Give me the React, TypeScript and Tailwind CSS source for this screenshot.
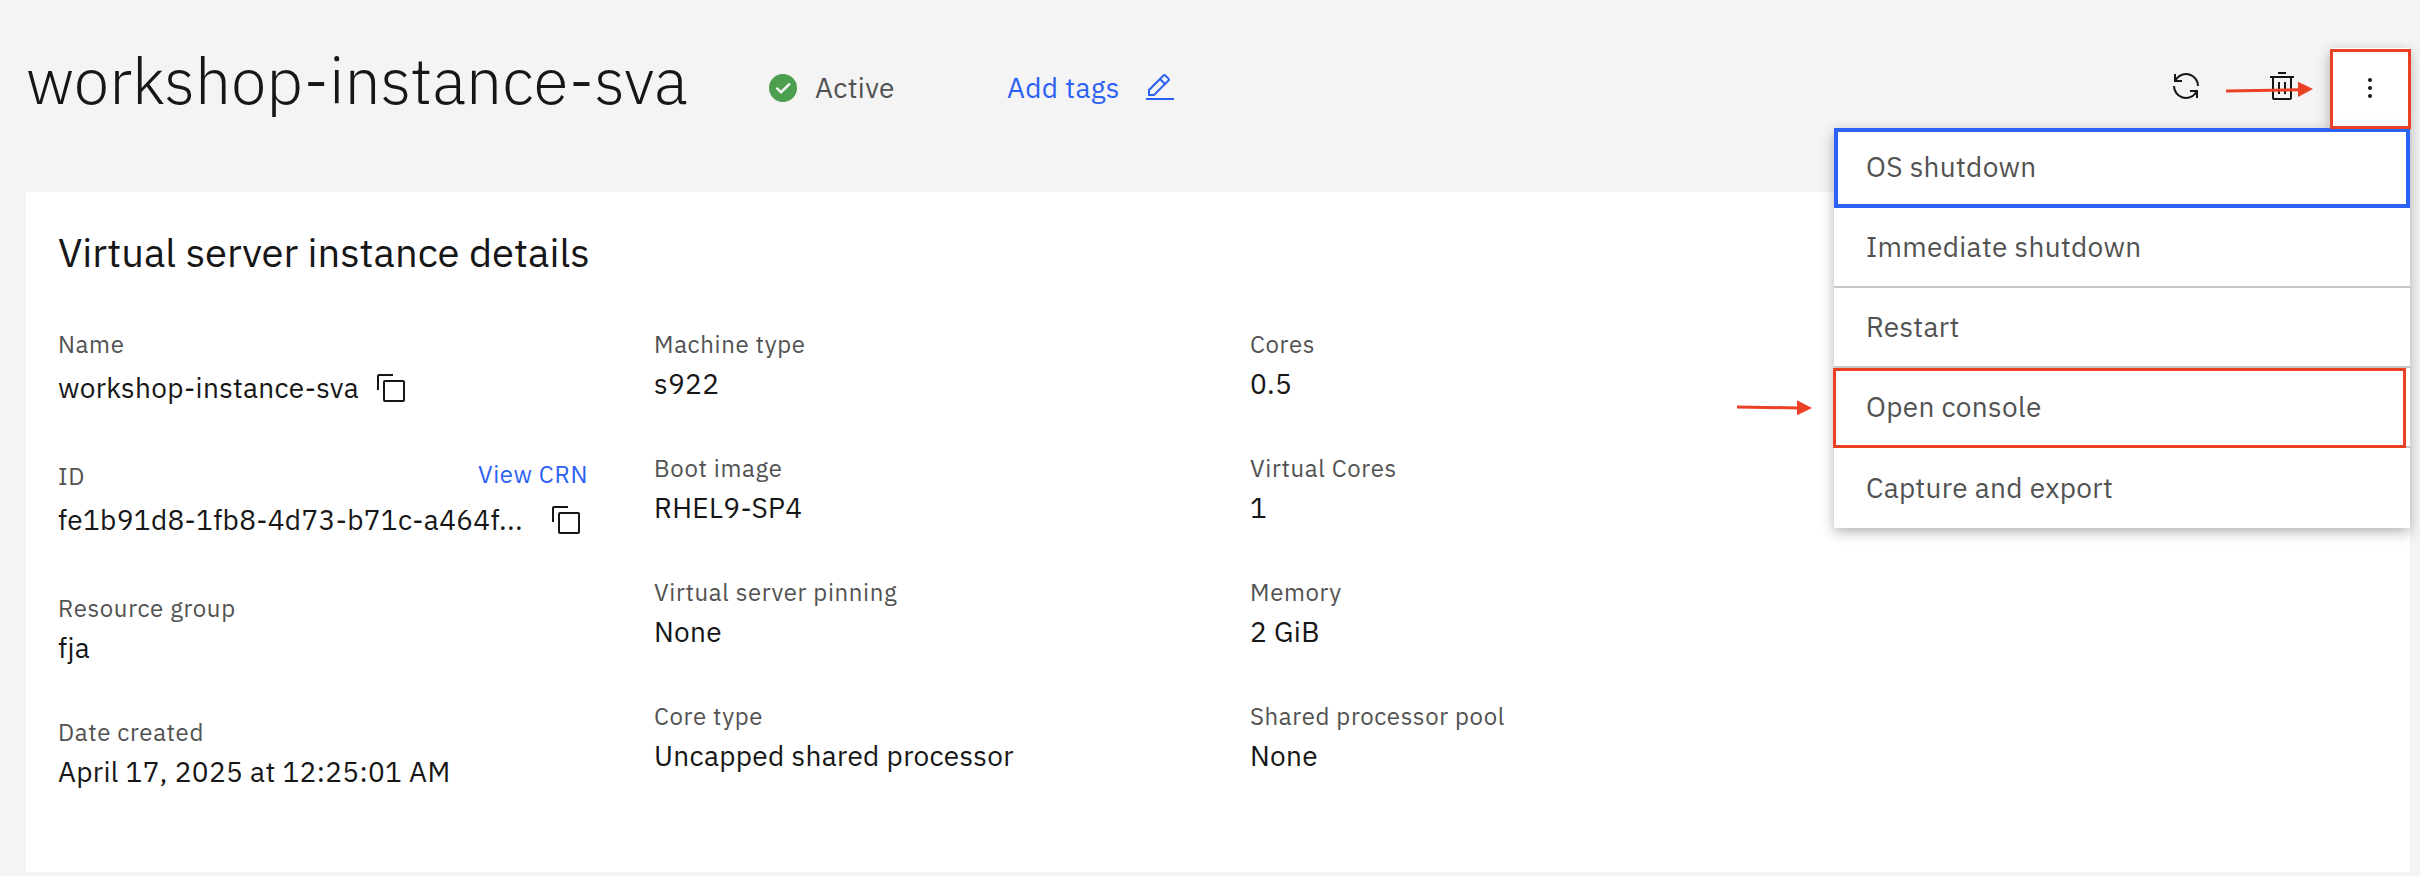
import type { ReactNode } from "react";

type IconProps = { className?: string; children: ReactNode };

function Icon({ className = "", children }: IconProps) {
  return (
    <svg viewBox="0 0 32 32" fill="currentColor" className={`size-8 shrink-0 ${className}`} aria-hidden="true">
      {children}
    </svg>
  );
}

function CopyIcon({ className }: { className?: string }) {
  return (
    <Icon className={className}>
      <path d="M28,10V28H10V10H28m0-2H10a2,2,0,0,0-2,2V28a2,2,0,0,0,2,2H28a2,2,0,0,0,2-2V10a2,2,0,0,0-2-2Z" />
      <path d="M4,18H2V4A2,2,0,0,1,4,2H18V4H4Z" />
    </Icon>
  );
}

function Field({ label, value }: { label: string; value: string }) {
  return (
    <div className="mb-[50px] flex flex-col items-start gap-[5px]">
      <div className="text-2xl/8 tracking-[0.64px] text-[#525252]">{label}</div>
      <div className="text-[28px]/[37px] tracking-[0.32px]">{value}</div>
    </div>
  );
}

function Header() {
  return (
    <header className="flex h-48 items-start pr-2.5 pl-[26px]">
      <h1 className="mt-10 w-[741px] text-[64px]/[80px] font-light">workshop-instance-sva</h1>
      <div className="mt-[69px] flex w-[240px] items-start text-[28px]/[37px] tracking-[0.32px] text-[#525252]">
        <Icon className="mt-[3px] mr-4 text-[#4d9f50]">
          <path d="M16 2a14 14 0 1 0 0 28a14 14 0 0 0 0-28zM14 22L8.600 16.600l1.800-1.600L14 18.600l8-7.800l1.800 1.600z" />
        </Icon>
        <span>Active</span>
      </div>
      <a className="mt-[69px] flex items-start text-[28px]/[37px] tracking-[0.32px] text-[#2c61f6]">
        <span className="w-[137px]">Add tags</span>
        <Icon className="mt-[3px]">
          <path d="M2 26H30V28H2z" />
          <path d="M25.4,9c.8-.8.8-2,0-2.8l-3.6-3.6c-.8-.8-2-.8-2.8,0L4,17.6V24h6.400ZM20.4,4,24,7.600l-3,3L17.4,7ZM6,22V18.4l10-10,3.600,3.600-10,10Z" />
        </Icon>
      </a>
      <div className="ml-auto flex items-start">
        <Icon className="mt-[70px] mr-16">
          <path d="M12,10H6.78A11,11,0,0,1,27,16h2A13,13,0,0,0,6,7.68V4H4v8h8Z" />
          <path d="M20,22h5.22A11,11,0,0,1,5,16H3a13,13,0,0,0,23,8.32V28h2V20H20Z" />
        </Icon>
        <Icon className="mt-[70px] mr-8">
          <path d="M12 12H14V24H12zM18 12H20V24H18zM12 2H20V4H12z" />
          <path d="M4,6V8H6V28a2,2,0,0,0,2,2H24a2,2,0,0,0,2-2V8h2V6ZM8,28V8H24V28Z" />
        </Icon>
        <button className="mt-12 flex size-20 items-center justify-center bg-white shadow-[0_4px_12px_rgba(0,0,0,0.3)]">
          <Icon>
            <circle cx="16" cy="8" r="2" />
            <circle cx="16" cy="16" r="2" />
            <circle cx="16" cy="24" r="2" />
          </Icon>
        </button>
      </div>
    </header>
  );
}

function Menu() {
  const item = "flex h-20 items-start px-8 text-[28px]/[37px] tracking-[0.32px] text-[#525252]";
  return (
    <div className="absolute top-32 left-[1834px] w-[576px] bg-white shadow-[0_4px_12px_rgba(0,0,0,0.3)]">
      <div className={`${item} pt-5 shadow-[inset_0_0_0_4px_#2c61f6]`}>OS shutdown</div>
      <div className={`${item} border-b-2 border-[#c6c6c6] pt-5`}>Immediate shutdown</div>
      <div className={`${item} border-b-2 border-[#c6c6c6] pt-5`}>Restart</div>
      <div className={`${item} border-b-2 border-[#c6c6c6] pt-5`}>Open console</div>
      <div className={`${item} pt-[21px]`}>Capture and export</div>
    </div>
  );
}

function Annotations() {
  return (
    <>
      <div className="absolute top-[49px] left-[2330px] h-20 w-[81px] border-3 border-[#ea4026]" />
      <div className="absolute top-[368px] left-[1833px] h-20 w-[573px] border-3 border-[#ea4026]" />
      <svg viewBox="0 0 87 16" className="absolute top-[81px] left-[2226px] h-4 w-[87px] text-[#ea4026]" aria-hidden="true">
        <path d="M0 10L73 8.800" stroke="currentColor" strokeWidth="3" />
        <path d="M72 0.800L87 8L72 16z" fill="currentColor" />
      </svg>
      <svg viewBox="0 0 75 16" className="absolute top-[400px] left-[1737px] h-4 w-[75px] text-[#ea4026]" aria-hidden="true">
        <path d="M0 7L61 7.900" stroke="currentColor" strokeWidth="3" />
        <path d="M60 0.200L75 7.900L60 15.200z" fill="currentColor" />
      </svg>
    </>
  );
}

export default function App() {
  return (
    <div className="relative flex h-[876px] w-[2420px] flex-col overflow-hidden bg-[#f4f4f4] font-['IBM_Plex_Sans','Open_Sans',sans-serif] text-[#161616]">
      <Header />
      <main className="mr-2.5 ml-[26px] h-[680px] bg-white px-8 pt-[34px]">
        <h2 className="mb-[50px] text-[40px]/[52px]">Virtual server instance details</h2>
        <div className="grid grid-cols-[596px_596px_596px]">
          <div>
            <div className="mb-[55px] flex flex-col gap-[9px]">
              <div className="text-2xl/8 tracking-[0.64px] text-[#525252]">Name</div>
              <div className="flex h-9 items-start text-[28px]/[37px] tracking-[0.32px]">
                <span className="w-[317px]">workshop-instance-sva</span>
                <CopyIcon className="mt-[3px]" />
              </div>
            </div>
            <div className="mb-[55px] flex w-[530px] flex-col gap-[9px]">
              <div className="flex h-8 items-start justify-between text-2xl/8 tracking-[0.64px]">
                <span className="text-[#525252]">ID</span>
                <a className="-mt-0.5 text-[#2c61f6]">View CRN</a>
              </div>
              <div className="flex h-9 items-start text-[28px]/[37px] tracking-[0.32px]">
                <span className="w-[492px]">fe1b91d8-1fb8-4d73-b71c-a464f...</span>
                <CopyIcon className="mt-[3px]" />
              </div>
            </div>
            <Field label="Resource group" value="fja" />
            <Field label="Date created" value="April 17, 2025 at 12:25:01 AM" />
          </div>
          <div>
            <Field label="Machine type" value="s922" />
            <Field label="Boot image" value="RHEL9-SP4" />
            <Field label="Virtual server pinning" value="None" />
            <Field label="Core type" value="Uncapped shared processor" />
          </div>
          <div>
            <Field label="Cores" value="0.5" />
            <Field label="Virtual Cores" value="1" />
            <Field label="Memory" value="2 GiB" />
            <Field label="Shared processor pool" value="None" />
          </div>
        </div>
      </main>
      <Menu />
      <Annotations />
    </div>
  );
}
